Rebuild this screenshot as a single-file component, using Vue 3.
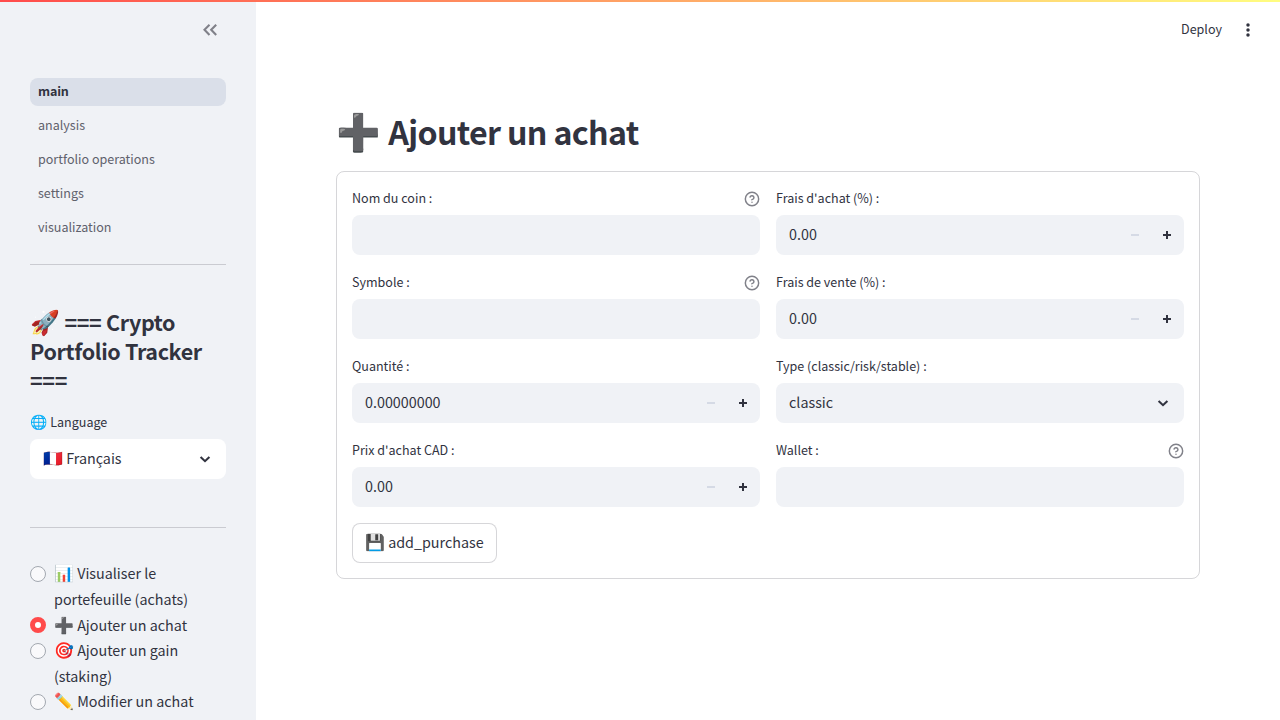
<script setup>
const pages = ['main', 'analysis', 'portfolio operations', 'settings', 'visualization']
const actions = [
  { icon: '📊', lines: ['Visualiser le', 'portefeuille (achats)'] },
  { icon: '➕', lines: ['Ajouter un achat'], on: true },
  { icon: '🎯', lines: ['Ajouter un gain', '(staking)'] },
  { icon: '✏️', lines: ['Modifier un achat'] },
]
const fields = [
  { label: 'Nom du coin :', type: 'text', help: true },
  { label: "Frais d'achat (%) :", type: 'number', value: '0.00' },
  { label: 'Symbole :', type: 'text', help: true },
  { label: 'Frais de vente (%) :', type: 'number', value: '0.00' },
  { label: 'Quantité :', type: 'number', value: '0.00000000' },
  { label: 'Type (classic/risk/stable) :', type: 'select', value: 'classic' },
  { label: "Prix d'achat CAD :", type: 'number', value: '0.00' },
  { label: 'Wallet :', type: 'text', help: true },
]
</script>

<template>
  <div class="app">
    <div class="decoration"></div>
    <aside class="sidebar">
      <div class="collapse">
        <svg width="24" height="24" viewBox="0 0 24 24" fill="none" stroke="currentColor" stroke-width="2.1"><path d="M11.5 6.7l-5 5.1 5 5.1M18.2 6.7l-5 5.1 5 5.1" /></svg>
      </div>
      <nav>
        <a v-for="(p, i) in pages" :key="p" :class="{ active: i === 0 }">{{ p }}</a>
      </nav>
      <hr />
      <h2><span class="emoji">🚀</span> === Crypto<br />Portfolio Tracker<br />===</h2>
      <div class="lang-label"><span class="emoji">🌐</span> Language</div>
      <div class="lang-select">
        <div class="value"><span class="emoji">🇫🇷</span> Français</div>
        <svg class="chevron" width="20" height="20" viewBox="0 0 24 24"><path d="M6.7 9.5 12 14.6l5.3-5.1" /></svg>
      </div>
      <hr class="second" />
      <div class="radios">
        <div v-for="a in actions" :key="a.icon" class="radio">
          <span class="dot" :class="{ on: a.on }"></span>
          <div class="radio-text">
            <div v-for="(l, i) in a.lines" :key="l"><template v-if="i === 0"><span class="emoji">{{ a.icon }}</span>{{ ' ' }}</template>{{ l }}</div>
          </div>
        </div>
      </div>
    </aside>
    <main>
      <header>
        <span class="deploy">Deploy</span>
        <svg width="20" height="20" viewBox="0 0 20 20" fill="currentColor"><circle cx="10" cy="4.9" r="1.75" /><circle cx="10" cy="10" r="1.75" /><circle cx="10" cy="15.1" r="1.75" /></svg>
      </header>
      <h1><span class="emoji">➕</span> <span class="h1-text">Ajouter un achat</span></h1>
      <form class="form">
        <div class="grid">
          <div v-for="f in fields" :key="f.label" class="field">
            <div class="label">
              <span>{{ f.label }}</span>
              <svg v-if="f.help" width="16" height="16" viewBox="0 0 24 24" fill="none" stroke="currentColor" stroke-width="2.2" stroke-linecap="round" stroke-linejoin="round"><circle cx="12" cy="12" r="10" /><path d="M9.09 9a3 3 0 0 1 5.83 1c0 2-3 3-3 3M12 17h.01" /></svg>
            </div>
            <div class="control">
              <span class="value">{{ f.value }}</span>
              <template v-if="f.type === 'number'">
                <span class="step minus"><svg width="8" height="2"><path d="M0 0h8v2H0z" /></svg></span>
                <span class="step"><svg width="8" height="8"><path d="M3 0v3H0v2h3v3h2V5h3V3H5V0z" /></svg></span>
              </template>
              <svg v-if="f.type === 'select'" class="chevron" width="20" height="20" viewBox="0 0 24 24"><path d="M6.7 9.5 12 14.6l5.3-5.1" /></svg>
            </div>
          </div>
        </div>
        <button type="button"><span class="emoji">💾</span> add_purchase</button>
      </form>
    </main>
  </div>
</template>

<style>
body { margin: 0; overflow: hidden; }
</style>

<style scoped>
* { box-sizing: border-box; }
.app {
  position: relative;
  display: flex;
  width: 1280px;
  height: 720px;
  overflow: hidden;
  background: #fff;
  color: #31333f;
  font-family: "Noto Sans CJK SC", "Noto Color Emoji", sans-serif;
  font-size: 14.33px;
}
.decoration {
  position: absolute;
  inset: 0 0 auto 0;
  height: 2px;
  background: linear-gradient(90deg, #ff4b4b, #fffd80);
}
.emoji { font-family: "Noto Color Emoji", sans-serif; font-size: 16px; line-height: 1; font-weight: 400; letter-spacing: 0; }
.sidebar { width: 256px; height: 720px; padding: 0 30px; background: #f0f2f6; overflow: hidden; flex: none; }
.collapse { height: 78px; display: flex; justify-content: flex-end; padding: 18px 4px 0 0; color: #808189; }
nav { display: flex; flex-direction: column; gap: 6px; }
nav a { height: 28px; line-height: 26px; padding: 0 8px; border-radius: 8px; font-size: 12.54px; color: #5f616c; }
nav a.active { background: #dadfe9; color: #31333f; font-weight: 700; letter-spacing: -0.15px; }
hr { border: 0; height: 1px; margin: 22px 0 0; background: rgba(49, 51, 63, 0.2); }
h2 { margin: 43px 0 0; font-size: 21.5px; line-height: 28.8px; font-weight: 700; letter-spacing: -0.36px; white-space: nowrap; }
h2 .emoji { font-size: 24px; }
.lang-label { margin-top: 17px; height: 28px; line-height: 22px; font-size: 12.54px; }
.lang-label .emoji { font-size: 14px; }
.lang-select { display: flex; align-items: center; justify-content: space-between; height: 40px; padding: 0 11px 0 13px; border-radius: 8px; background: #fff; }
.chevron { fill: none; stroke: #31333f; stroke-width: 2.5; }
hr.second { margin-top: 48px; }
.radios { margin-top: 32px; }
.radio { display: flex; gap: 8px; line-height: 25.6px; white-space: nowrap; }
.dot { flex: none; width: 16px; height: 16px; margin-top: 5.7px; border: 1px solid #a3a8b0; border-radius: 50%; background: #f9f9fb; }
.dot.on { border: 5px solid #ff4b4b; background: #fff; }
main { flex: 1; padding: 0 80px; }
header { display: flex; justify-content: flex-end; align-items: center; gap: 16px; height: 60px; margin-right: -58px; }
.deploy { margin-top: -2px; font-size: 12.54px; line-height: 20px; }
h1 { display: flex; align-items: center; gap: 7.5px; height: 43px; margin: 51px 0 17px; font-size: 32.2px; line-height: 43px; font-weight: 700; letter-spacing: -0.68px; white-space: nowrap; }
h1 .emoji { font-size: 36px; }
.h1-text { margin-top: -2px; }
.form { height: 408px; padding: 15px; border: 1px solid rgba(49, 51, 63, 0.2); border-radius: 8px; }
.grid { display: grid; grid-template-columns: 1fr 1fr; gap: 16px; }
.label { display: flex; justify-content: space-between; height: 28px; font-size: 12.54px; line-height: 22px; }
.label svg { margin-top: 4px; color: #808189; }
.control { display: flex; align-items: center; height: 40px; padding-left: 13px; border-radius: 8px; background: #f0f2f6; }
.control .value { flex: 1; }
.control .chevron { margin-right: 11px; }
.value { line-height: 38px; height: 40px; }
.step { display: flex; justify-content: center; width: 32px; fill: #31333f; }
.step:last-child { margin-right: 1px; }
.minus { fill: #d5dae5; }
button { display: block; height: 40px; margin-top: 16px; padding: 0 12px 2px; border: 1px solid rgba(49, 51, 63, 0.2); border-radius: 8px; background: #fff; color: inherit; font: inherit; line-height: 36px; }
</style>
